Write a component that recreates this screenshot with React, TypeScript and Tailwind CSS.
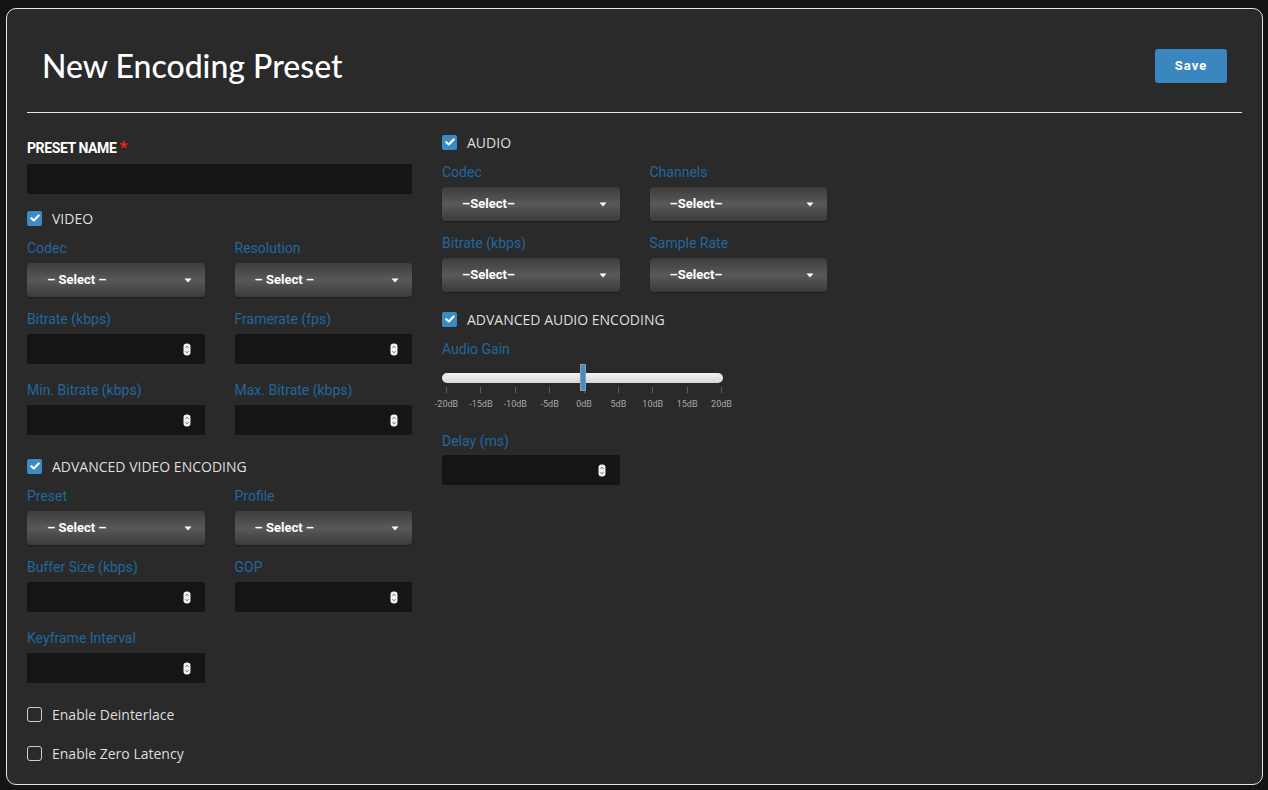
import React from "react";

const labelCls = "h-[18px] leading-[18px] text-[14px] text-[#21679f] font-['Roboto',sans-serif]";

function Caret() {
    return (
        <svg width="8" height="5" viewBox="0 0 8 5" className="shrink-0">
            <path d="M0.5 0.5 L7.5 0.5 L4 4.5 Z" fill="#ffffff" />
        </svg>
    );
}

function Spinner() {
    return (
        <svg width="8" height="13" viewBox="0 0 8 13" className="shrink-0">
            <rect x="0.5" y="0.5" width="7" height="12" rx="3.2" fill="#f2f2f2" />
            <path d="M2.5 4.8 L4 3.2 L5.5 4.8" stroke="#555" strokeWidth="0.9" fill="none" />
            <path d="M2.5 8.2 L4 9.8 L5.5 8.2" stroke="#555" strokeWidth="0.9" fill="none" />
        </svg>
    );
}

function SelectBox({ text }: { text: string }) {
    return (
        <div className="h-[34px] rounded-[4px] bg-gradient-to-b from-[#3d3d3d] via-[#595959] to-[#3b3b3b] flex items-center justify-between pl-[20px] pr-[13px] shadow-[0_1px_1px_rgba(0,0,0,0.3)]">
            <span className="text-[13px] font-bold text-white font-['Roboto',sans-serif]">{text}</span>
            <Caret />
        </div>
    );
}

function NumberBox() {
    return (
        <div className="h-[30px] rounded-[2px] bg-[#151515] flex items-center justify-end pr-[14px]">
            <Spinner />
        </div>
    );
}

function Field({ label, children }: { label: string; children: React.ReactNode }) {
    return (
        <div className="h-[71px]">
            <div className={labelCls}>{label}</div>
            <div className="mt-[6px]">{children}</div>
        </div>
    );
}

function Check({ label, checked = true, className = "" }: { label: string; checked?: boolean; className?: string }) {
    return (
        <div className={`h-[20px] flex items-center gap-[10px] ${className}`}>
            {checked ? (
                <div className="w-[15px] h-[15px] rounded-[2px] bg-[#3a8ac4] flex items-center justify-center">
                    <svg width="10" height="8" viewBox="0 0 10 8">
                        <path d="M1.3 4.2 L3.8 6.5 L8.7 1.4" stroke="#fff" strokeWidth="2.1" fill="none" strokeLinecap="round" strokeLinejoin="round" />
                    </svg>
                </div>
            ) : (
                <div className="w-[15px] h-[15px] rounded-[3px] border border-[#d0d0d0]" />
            )}
            <span className="text-[14px] text-[#dedede] font-['Open_Sans',sans-serif]">{label}</span>
        </div>
    );
}

const ticks = ["-20dB", "-15dB", "-10dB", "-5dB", "0dB", "5dB", "10dB", "15dB", "20dB"];

function GainSlider() {
    return (
        <div className="w-[281px] h-[74px] pt-[15px]">
            <div className="relative h-[10px] rounded-full bg-gradient-to-b from-[#f4f4f4] to-[#d6d6d6]">
                <div className="absolute left-[138px] top-[-9px] w-[6px] h-[27px] bg-[#3a8fd0] border border-[#9a9a9a]" />
            </div>
            <div className="flex justify-between pl-[4px] pr-[1px] mt-[4px]">
                {ticks.map((t) => (
                    <div key={t} className="w-px flex flex-col items-center">
                        <div className="w-px h-[6px] bg-[#2d6a9a]" />
                        <div className="mt-[6px] text-[9px] leading-[10px] text-[#a8a8a8] whitespace-nowrap font-['Roboto',sans-serif]">{t}</div>
                    </div>
                ))}
            </div>
        </div>
    );
}

export default function App() {
    return (
        <div className="w-[1268px] h-[790px] bg-[#141414] pt-[8px] pl-[6px] pr-[5px] pb-[5px] flex">
            <div className="flex-1 rounded-[10px] border border-[#e6e6e6] bg-[#2a2a2a] px-[20px]">
                {/* Header */}
                <div className="flex items-center justify-between px-[15px] pt-[40px] pb-[29px] border-b border-[#e6e6e6]">
                    <h1 className="text-[32px] leading-[34px] font-medium text-white font-['Lato',sans-serif]">New Encoding Preset</h1>
                    <button className="w-[72px] h-[34px] rounded-[3px] bg-[#3987be] text-white text-[13px] font-bold tracking-[1px] font-['Roboto',sans-serif]">
                        Save
                    </button>
                </div>

                <div className="flex items-start gap-[30px]">
                    {/* Video column */}
                    <div className="w-[385px] pt-[25px]">
                        <div className="h-[18px] leading-[18px] text-[14px] font-bold text-white tracking-[-0.4px] font-['Roboto',sans-serif]">
                            PRESET NAME <span className="text-[#ff1a1a] text-[17px]">*</span>
                        </div>
                        <div className="mt-[8px] h-[30px] rounded-[2px] bg-[#151515]" />

                        <Check label="VIDEO" className="mt-[14px]" />
                        <div className="mt-[11px] grid grid-cols-2 gap-x-[30px]">
                            <Field label="Codec"><SelectBox text="– Select –" /></Field>
                            <Field label="Resolution"><SelectBox text="– Select –" /></Field>
                            <Field label="Bitrate (kbps)"><NumberBox /></Field>
                            <Field label="Framerate (fps)"><NumberBox /></Field>
                            <Field label="Min. Bitrate (kbps)"><NumberBox /></Field>
                            <Field label="Max. Bitrate (kbps)"><NumberBox /></Field>
                        </div>

                        <Check label="ADVANCED VIDEO ENCODING" className="mt-[4px]" />
                        <div className="mt-[11px] grid grid-cols-2 gap-x-[30px]">
                            <Field label="Preset"><SelectBox text="– Select –" /></Field>
                            <Field label="Profile"><SelectBox text="– Select –" /></Field>
                            <Field label="Buffer Size (kbps)"><NumberBox /></Field>
                            <Field label="GOP"><NumberBox /></Field>
                            <Field label="Keyframe Interval"><NumberBox /></Field>
                        </div>

                        <Check label="Enable Deinterlace" checked={false} className="mt-[4px]" />
                        <Check label="Enable Zero Latency" checked={false} className="mt-[19px]" />
                    </div>

                    {/* Audio column */}
                    <div className="w-[385px] pt-[19px]">
                        <Check label="AUDIO" />
                        <div className="mt-[11px] grid grid-cols-2 gap-x-[30px]">
                            <Field label="Codec"><SelectBox text="–Select–" /></Field>
                            <Field label="Channels"><SelectBox text="–Select–" /></Field>
                            <Field label="Bitrate (kbps)"><SelectBox text="–Select–" /></Field>
                            <Field label="Sample Rate"><SelectBox text="–Select–" /></Field>
                        </div>

                        <Check label="ADVANCED AUDIO ENCODING" className="mt-[4px]" />
                        <div className="mt-[11px]">
                            <div className={labelCls}>Audio Gain</div>
                            <GainSlider />
                        </div>
                        <div className="w-[178px]">
                            <div className={labelCls}>Delay (ms)</div>
                            <div className="mt-[5px]"><NumberBox /></div>
                        </div>
                    </div>
                </div>
            </div>
        </div>
    );
}
